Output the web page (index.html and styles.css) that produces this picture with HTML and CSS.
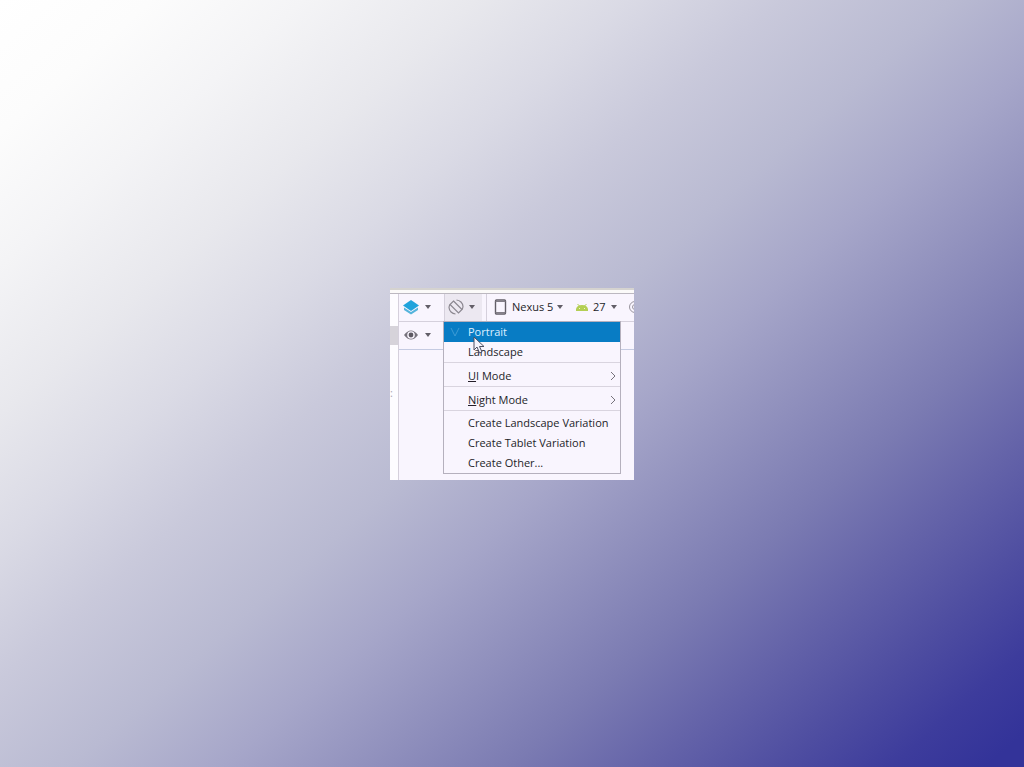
FILE: index.html
```html
<!DOCTYPE html>
<html lang="en">
<head>
<meta charset="utf-8">
<title>Layout editor orientation menu</title>
<link rel="stylesheet" href="styles.css">
</head>
<body>
<main class="editor">
  <div class="tab-strip"></div>
  <div class="workspace">
    <div class="gutter"><span class="gutter-mark"></span><span class="gutter-dots">:</span></div>
    <div class="design">
      <div class="toolbar">
        <button class="tool surface" aria-label="Select design surface">
          <svg class="icon" viewBox="0 0 16 16"><path d="M1 8.500 8 13l7-4.500V11l-7 4.500L1 11z" fill="#55b4dc"/><path d="M8 1l8 5.500L8 12 0 6.500z" fill="#20a3dc"/></svg>
          <span class="caret"></span>
        </button>
        <button class="tool orientation" aria-label="Orientation for preview" aria-expanded="true">
          <svg class="icon" viewBox="0 0 16 16" fill="none" stroke="#8b8790" stroke-width="1.200"><path d="M5.500 2 14 10.500 10.500 14 2 5.500z"/><path d="M8.500 1A7 7 0 0 1 15 7.500M7.500 15A7 7 0 0 1 1 8.500M2 5.500A7 7 0 0 0 1 8.500M14 10.500A7 7 0 0 0 15 7.500"/></svg>
          <span class="caret"></span>
        </button>
        <button class="tool device">
          <svg class="icon" viewBox="0 0 16 16"><rect x="3.500" y="1" width="10" height="14" rx="1" fill="none" stroke="#625e67" stroke-width="1.400"/><path d="M3.500 2.500h10M3.500 13.500h10" stroke="#827e87"/></svg>
          <span>Nexus 5</span>
          <span class="caret"></span>
        </button>
        <button class="tool api">
          <svg class="icon-android" viewBox="0 0 12 12"><path d="M0 10V8Q1 4 6 4t6 4v2z" fill="#b4cf54"/><path d="M1.500 3l2 2M10.500 3l-2 2" stroke="#b4cf54"/><path d="M3 7.500h1M8 7.500h1" stroke="#eef5cc"/></svg>
          <span>27</span>
          <span class="caret"></span>
        </button>
        <svg class="icon theme" viewBox="0 0 16 16" fill="none" stroke="#99959e"><circle cx="9" cy="8" r="5.500"/><circle cx="9" cy="8" r="2.500"/></svg>
      </div>
      <div class="toolbar second">
        <button class="tool surface" aria-label="View options">
          <svg class="icon" viewBox="0 0 16 16"><path d="M1 8Q8-1 15 8 8 17 1 8z" fill="#77737c"/><circle cx="8" cy="8" r="3.800" fill="#f8f4fd"/><circle cx="8" cy="8" r="2.400" fill="#5d5962"/></svg>
          <span class="caret"></span>
        </button>
      </div>
      <div class="menu" role="menu">
        <button class="item selected" role="menuitem"><svg class="check" viewBox="0 0 12 12"><path d="M2 2l4 8 4-8" fill="none" stroke="#3d9bd5"/></svg>Portrait</button>
        <button class="item" role="menuitem">Landscape</button>
        <button class="item group" role="menuitem"><span><u>U</u>I Mode</span><svg class="arrow" viewBox="0 0 6 10"><path d="M1 1l4 4-4 4" fill="none" stroke="#77737c"/></svg></button>
        <button class="item group" role="menuitem"><span><u>N</u>ight Mode</span><svg class="arrow" viewBox="0 0 6 10"><path d="M1 1l4 4-4 4" fill="none" stroke="#77737c"/></svg></button>
        <button class="item group create" role="menuitem">Create Landscape Variation</button>
        <button class="item" role="menuitem">Create Tablet Variation</button>
        <button class="item" role="menuitem">Create Other...</button>
        <svg class="pointer" viewBox="0 0 12 18"><path d="M1 1v13l3-3 2.500 6 2.500-1-2.500-5.500H11z" fill="#f4f2fb" stroke="#4d4f62"/></svg>
      </div>
    </div>
  </div>
</main>
</body>
</html>
```
FILE: styles.css
```css
* { box-sizing: border-box; }

body {
  margin: 0;
  min-height: 100vh;
  display: grid;
  place-items: center;
  background: linear-gradient(139deg,
    #fff 0%, #fcfcfc 8%, #f4f4f6 16%, #e8e8ed 25%, #dadae5 33%,
    #c9c9db 41%, #b9bad2 50%, #a6a6c9 58%, #9292be 65%,
    #7b7bb2 73%, #6564a9 80%, #4f4ea1 87%, #3d3c9c 93%, #339 98%);
  font: 11px/16px "Open Sans", "Noto Sans", sans-serif;
  color: #241e29;
}

.editor {
  display: flex;
  flex-direction: column;
  width: 244px;
  min-height: 192px;
  overflow: hidden;
  background: #f9f5fe;
}

.tab-strip {
  height: 6px;
  border-top: 2px solid #d5d3d0;
  border-bottom: 1px solid #bcb8c0;
  background: #fbfaf9;
}

.workspace { display: flex; flex: 1; }

.gutter {
  display: flex;
  flex-direction: column;
  gap: 40px;
  width: 9px;
  padding-top: 32px;
  border-right: 1px solid #d5d0dc;
  background: #fdfcff;
}

.gutter-mark { height: 19px; background: #d6d3da; }
.gutter-dots { line-height: 16px; color: #aaa6b0; }

.design { position: relative; flex: 1; min-width: 0; }

.toolbar {
  display: flex;
  align-items: center;
  height: 28px;
  overflow: hidden;
  border-bottom: 1px solid #d5d0dc;
}

.second { border-bottom-color: #c5cbe2; }

.tool {
  display: flex;
  flex: none;
  align-items: center;
  gap: 6px;
  height: 28px;
  padding: 0;
  border: 0;
  background: none;
  color: inherit;
  font: inherit;
  white-space: nowrap;
}

.surface { width: 45px; padding-left: 4px; }
.orientation { width: 38px; padding-left: 3px; gap: 5px; background: #ece8f1; border-left: 1px solid #d5d0dc; }
.device { width: 90px; margin-left: 4px; padding-left: 5px; gap: 4px; border-left: 1px solid #d5d0dc; }
.api { width: 50px; gap: 5px; }

.icon { flex: none; width: 16px; height: 16px; }
.icon-android { width: 12px; height: 12px; }

.caret {
  border: 3px solid transparent;
  border-top: 4px solid #625e67;
  border-bottom: 0;
}

.menu {
  position: absolute;
  top: 27px;
  left: 44px;
  width: 178px;
  border: 1px solid #b5b0bd;
  background: #f9f5fe;
}

.item {
  display: flex;
  align-items: center;
  justify-content: space-between;
  width: 100%;
  height: 20px;
  padding: 0 4px 0 24px;
  border: 0;
  background: none;
  color: inherit;
  font: inherit;
  text-align: left;
}

.group { height: 24px; padding-top: 3px; border-top: 1px solid #d9d4df; }
.create { height: 23px; }

.selected {
  justify-content: flex-start;
  gap: 7px;
  padding-left: 5px;
  background: #087cc4;
  color: #dcefff;
}

.check { width: 12px; height: 12px; }
.arrow { width: 6px; height: 10px; }

.pointer { position: absolute; top: 14px; left: 29px; width: 12px; height: 18px; }
```
